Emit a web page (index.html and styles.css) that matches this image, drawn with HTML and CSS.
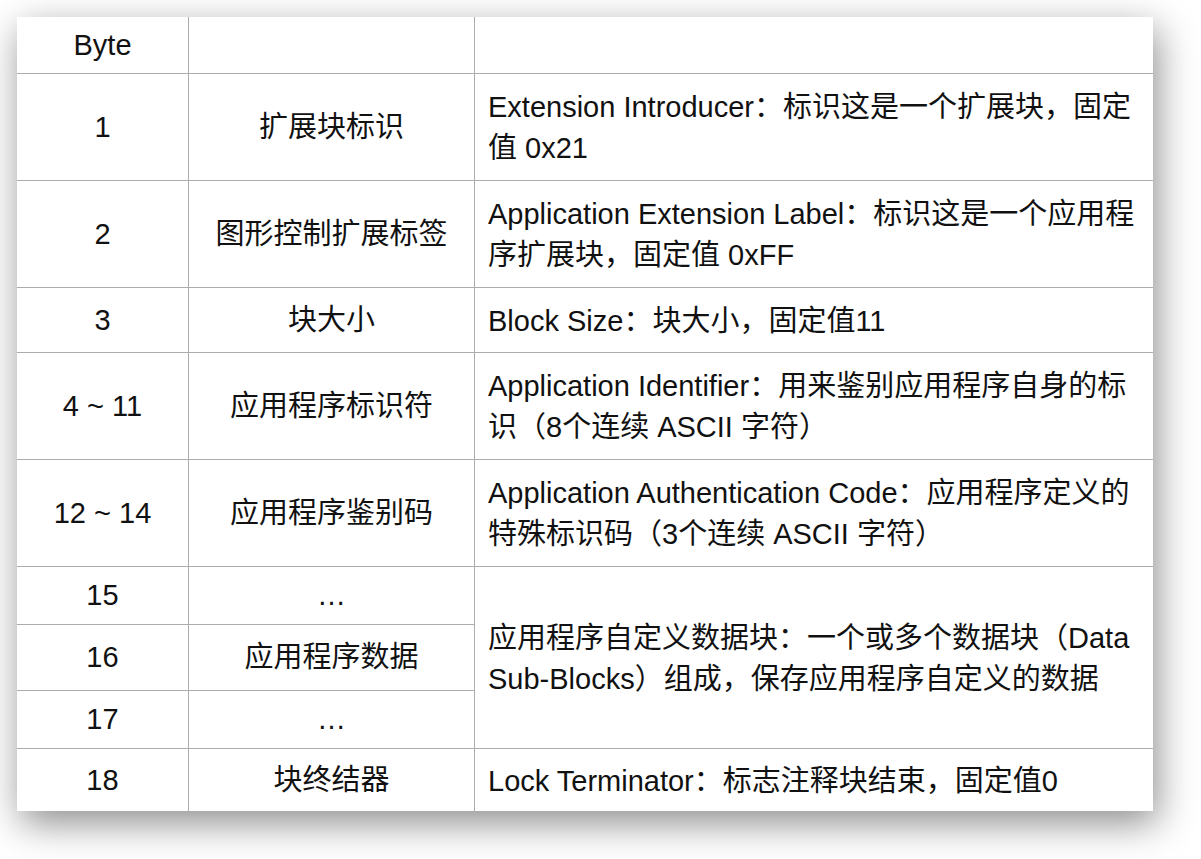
FILE: index.html
```html
<!DOCTYPE html>
<html lang="zh-CN">
<head>
<meta charset="utf-8">
<title>Application Extension</title>
<link rel="stylesheet" href="styles.css">
</head>
<body>
<div class="page">
  <table class="spec">
    <tbody>
      <tr class="h-head">
        <td class="c-byte">Byte</td>
        <td class="c-name"></td>
        <td class="c-desc"></td>
      </tr>
      <tr class="h-two">
        <td class="c-byte">1</td>
        <td class="c-name">扩展块标识</td>
        <td class="c-desc">Extension Introducer：标识这是一个扩展块，固定值 0x21</td>
      </tr>
      <tr class="h-two">
        <td class="c-byte">2</td>
        <td class="c-name">图形控制扩展标签</td>
        <td class="c-desc">Application Extension Label：标识这是一个应用程序扩展块，固定值 0xFF</td>
      </tr>
      <tr class="h-one">
        <td class="c-byte">3</td>
        <td class="c-name">块大小</td>
        <td class="c-desc">Block Size：块大小，固定值11</td>
      </tr>
      <tr class="h-two">
        <td class="c-byte">4 ~ 11</td>
        <td class="c-name">应用程序标识符</td>
        <td class="c-desc">Application Identifier：用来鉴别应用程序自身的标识（8个连续 ASCII 字符）</td>
      </tr>
      <tr class="h-two">
        <td class="c-byte">12 ~ 14</td>
        <td class="c-name">应用程序鉴别码</td>
        <td class="c-desc">Application Authentication Code：应用程序定义的特殊标识码（3个连续 ASCII 字符）</td>
      </tr>
      <tr class="h-sub">
        <td class="c-byte">15</td>
        <td class="c-name">…</td>
        <td class="c-desc" rowspan="3">应用程序自定义数据块：一个或多个数据块（Data Sub-Blocks）组成，保存应用程序自定义的数据</td>
      </tr>
      <tr class="h-mid">
        <td class="c-byte">16</td>
        <td class="c-name">应用程序数据</td>
      </tr>
      <tr class="h-sub">
        <td class="c-byte">17</td>
        <td class="c-name">…</td>
      </tr>
      <tr class="h-last">
        <td class="c-byte last">18</td>
        <td class="c-name last">块终结器</td>
        <td class="c-desc last">Lock Terminator：标志注释块结束，固定值0</td>
      </tr>
    </tbody>
  </table>
</div>
</body>
</html>
```

FILE: styles.css
```css
html, body {
  margin: 0;
  padding: 0;
  background: #ffffff;
}

.page {
  box-sizing: border-box;
  min-height: 859px;
  padding: 17px 17px 49px 17px;
}

.spec {
  border-collapse: separate;
  border-spacing: 0;
  table-layout: fixed;
  width: 1136px;
  background: #ffffff;
  box-shadow: 4px 12px 36px rgba(0, 0, 0, 0.45);
  font-family: "Liberation Sans", "Noto Sans CJK SC", sans-serif;
  font-size: 29px;
  line-height: 41px;
  color: #111111;
}

.spec td {
  padding: 0;
  vertical-align: middle;
  border-right: 1px solid #acacac;
  border-bottom: 1px solid #acacac;
  box-sizing: border-box;
}

.spec td.c-desc {
  border-right: none;
}

.spec td.last {
  border-bottom: none;
}

.c-byte {
  width: 172px;
  text-align: center;
}

.c-name {
  width: 286px;
  text-align: center;
}

.c-desc {
  width: 678px;
  text-align: left;
  padding: 2px 13px 0 13px !important;
}

.h-head { height: 57px; }
.h-two  { height: 107px; }
.h-one  { height: 65px; }
.h-sub  { height: 58px; }
.h-mid  { height: 66px; }
.h-last { height: 62px; }
```
